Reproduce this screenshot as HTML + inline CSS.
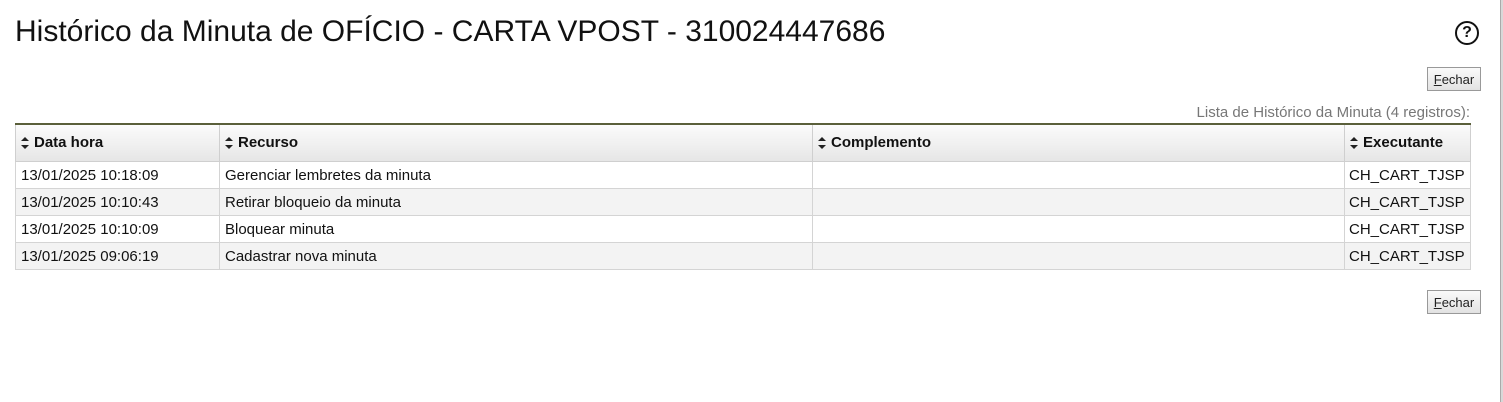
<!DOCTYPE html>
<html><head><style>
body{margin:0;width:1503px;height:402px;background:#fff;font-family:"Liberation Sans",Arial,sans-serif;position:relative;overflow:hidden}
h1{position:absolute;left:15px;top:15px;margin:0;font-weight:normal;font-size:30px;color:#111}
.help{position:absolute;left:1455px;top:21px;width:20px;height:20px;border:2px solid #111;border-radius:50%;font-size:16px;font-weight:bold;text-align:center;line-height:20px;color:#111}
.btn{position:absolute;left:1427px;width:54px;height:24px;border:1px solid #999;background:linear-gradient(#fafafa,#e2e2e2);font-size:13px;text-align:center;line-height:23px;color:#222;box-sizing:border-box}
.cap{position:absolute;right:33px;top:104px;font-size:15px;color:#777}
table{position:absolute;left:15px;top:123px;width:1456px;border-collapse:collapse;font-size:15px;color:#111}
th{height:36px;text-align:left;font-weight:bold;border:1px solid #cfcfcf;border-top:2px solid #5a5f3a;background:linear-gradient(#fbfbfb,#e6e6e6);padding:0 4px;font-size:15px}
td{height:26px;border:1px solid #d4d4d4;padding:0 5px}
tr.a td{background:#f3f3f3}
.s{display:inline-block;width:10px;vertical-align:middle;margin-right:4px;position:relative;top:-1px}
.edge{position:absolute;left:1500px;top:0;width:3px;height:402px;background:#d8d8d8;border-left:1px solid #aaa}
</style></head><body>
<h1>Histórico da Minuta de OFÍCIO - CARTA VPOST - 310024447686</h1>
<div class="help">?</div>
<div class="btn" style="top:67px"><u>F</u>echar</div>
<div class="cap">Lista de Histórico da Minuta (4 registros):</div>
<table>
<tr><th style="width:195px"><svg class="s" width="10" height="16" viewBox="0 0 10 16"><path d="M1 6L5 2L9 6Z M1 10L5 14L9 10Z" fill="#222"/></svg>Data hora</th><th style="width:584px"><svg class="s" width="10" height="16" viewBox="0 0 10 16"><path d="M1 6L5 2L9 6Z M1 10L5 14L9 10Z" fill="#222"/></svg>Recurso</th><th style="width:523px"><svg class="s" width="10" height="16" viewBox="0 0 10 16"><path d="M1 6L5 2L9 6Z M1 10L5 14L9 10Z" fill="#222"/></svg>Complemento</th><th><svg class="s" width="10" height="16" viewBox="0 0 10 16"><path d="M1 6L5 2L9 6Z M1 10L5 14L9 10Z" fill="#222"/></svg>Executante</th></tr>
<tr><td>13/01/2025 10:18:09</td><td>Gerenciar lembretes da minuta</td><td></td><td style="padding:0 4px">CH_CART_TJSP</td></tr>
<tr class="a"><td>13/01/2025 10:10:43</td><td>Retirar bloqueio da minuta</td><td></td><td style="padding:0 4px">CH_CART_TJSP</td></tr>
<tr><td>13/01/2025 10:10:09</td><td>Bloquear minuta</td><td></td><td style="padding:0 4px">CH_CART_TJSP</td></tr>
<tr class="a"><td>13/01/2025 09:06:19</td><td>Cadastrar nova minuta</td><td></td><td style="padding:0 4px">CH_CART_TJSP</td></tr>
</table>
<div class="btn" style="top:290px"><u>F</u>echar</div>
<div class="edge"></div>
</body></html>
